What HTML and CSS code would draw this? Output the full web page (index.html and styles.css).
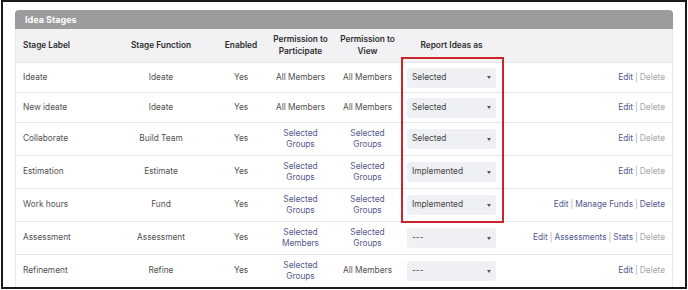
FILE: index.html
```html
<!DOCTYPE html>
<html lang="en">

<head>
  <meta charset="UTF-8" />
  <meta name="viewport" content="width=device-width, initial-scale=1.0" />
  <title>Idea Stages</title>
  <link rel="stylesheet" href="styles.css">
</head>

<body>
  <div class="frame">
    <div class="panel">
      <div class="panel-head">Idea Stages</div>
      <div class="panel-body">
        <table class="stages">
          <colgroup>
            <col class="col-label">
            <col class="col-function">
            <col class="col-enabled">
            <col class="col-part">
            <col class="col-view">
            <col class="col-report">
            <col class="col-actions">
          </colgroup>
          <thead>
            <tr>
              <th class="cell-left">Stage Label</th>
              <th>Stage Function</th>
              <th>Enabled</th>
              <th>Permission to<br>Participate</th>
              <th>Permission to<br>View</th>
              <th>Report Ideas as</th>
              <th></th>
            </tr>
          </thead>
          <tbody>
            <tr>
              <td class="cell-left">Ideate</td>
              <td>Ideate</td>
              <td>Yes</td>
              <td>All Members</td>
              <td>All Members</td>
              <td><div class="select"><span>Selected</span><i class="caret"></i></div></td>
              <td class="cell-right"><a class="link">Edit</a><span class="sep">|</span><span class="muted">Delete</span></td>
            </tr>
            <tr>
              <td class="cell-left">New ideate</td>
              <td>Ideate</td>
              <td>Yes</td>
              <td>All Members</td>
              <td>All Members</td>
              <td><div class="select"><span>Selected</span><i class="caret"></i></div></td>
              <td class="cell-right"><a class="link">Edit</a><span class="sep">|</span><span class="muted">Delete</span></td>
            </tr>
            <tr>
              <td class="cell-left">Collaborate</td>
              <td>Build Team</td>
              <td>Yes</td>
              <td><a class="link">Selected<br>Groups</a></td>
              <td><a class="link">Selected<br>Groups</a></td>
              <td><div class="select"><span>Selected</span><i class="caret"></i></div></td>
              <td class="cell-right"><a class="link">Edit</a><span class="sep">|</span><span class="muted">Delete</span></td>
            </tr>
            <tr>
              <td class="cell-left">Estimation</td>
              <td>Estimate</td>
              <td>Yes</td>
              <td><a class="link">Selected<br>Groups</a></td>
              <td><a class="link">Selected<br>Groups</a></td>
              <td><div class="select"><span>Implemented</span><i class="caret"></i></div></td>
              <td class="cell-right"><a class="link">Edit</a><span class="sep">|</span><span class="muted">Delete</span></td>
            </tr>
            <tr>
              <td class="cell-left">Work hours</td>
              <td>Fund</td>
              <td>Yes</td>
              <td><a class="link">Selected<br>Groups</a></td>
              <td><a class="link">Selected<br>Groups</a></td>
              <td><div class="select"><span>Implemented</span><i class="caret"></i></div></td>
              <td class="cell-right"><a class="link">Edit</a><span class="sep">|</span><a class="link">Manage Funds</a><span class="sep">|</span><a class="link">Delete</a></td>
            </tr>
            <tr>
              <td class="cell-left">Assessment</td>
              <td>Assessment</td>
              <td>Yes</td>
              <td><a class="link">Selected<br>Members</a></td>
              <td><a class="link">Selected<br>Groups</a></td>
              <td><div class="select"><span>---</span><i class="caret"></i></div></td>
              <td class="cell-right"><a class="link">Edit</a><span class="sep">|</span><a class="link">Assessments</a><span class="sep">|</span><a class="link">Stats</a><span class="sep">|</span><span class="muted">Delete</span></td>
            </tr>
            <tr>
              <td class="cell-left">Refinement</td>
              <td>Refine</td>
              <td>Yes</td>
              <td><a class="link">Selected<br>Groups</a></td>
              <td>All Members</td>
              <td><div class="select"><span>---</span><i class="caret"></i></div></td>
              <td class="cell-right"><a class="link">Edit</a><span class="sep">|</span><span class="muted">Delete</span></td>
            </tr>
          </tbody>
        </table>
      </div>
    </div>
    <div class="highlight"></div>
  </div>
</body>

</html>
```

FILE: styles.css
```css
:root {
  --color-text: #505050;
  --color-head-text: #2e2e2e;
  --color-link: #53578e;
  --color-muted: #a6a6ab;
  --color-panel-head: #9c9c9c;
  --color-thead-bg: #f2f2f5;
  --color-border: #e7e7ea;
  --color-select-bg: #eff0f3;
  --color-highlight: #c9252b;
  --font-base: Inter, "Noto Sans", sans-serif;
}

* {
  box-sizing: border-box;
  margin: 0;
  padding: 0;
}

body {
  font-family: var(--font-base);
  font-size: 8.3px;
  color: var(--color-text);
  background-color: #fff;
}

.frame {
  position: relative;
  margin-left: 1px;
  width: 686px;
  height: 289px;
  border: 2px solid #1a1a1a;
  padding: 8px 12px 0;
  overflow: hidden;
}

.panel {
  width: 658px;
}

.panel-head {
  height: 19px;
  line-height: 19px;
  padding-left: 10px;
  background-color: var(--color-panel-head);
  color: #fff;
  font-size: 9px;
  font-weight: 700;
  border-radius: 4px 4px 0 0;
}

.panel-body {
  border-left: 1px solid var(--color-border);
  border-right: 1px solid var(--color-border);
}

.stages {
  width: 100%;
  border-collapse: collapse;
  table-layout: fixed;
}

.col-label {
  width: 92px;
}

.col-function {
  width: 106px;
}

.col-enabled {
  width: 54px;
}

.col-part {
  width: 65px;
}

.col-view {
  width: 69px;
}

.col-report {
  width: 99px;
}

.col-actions {
  width: 171px;
}

.stages th,
.stages td {
  padding: 4.5px 3px;
  line-height: 11.5px;
  text-align: center;
  vertical-align: middle;
  white-space: nowrap;
}

.stages th {
  padding-top: 5px;
  padding-bottom: 5px;
  background-color: var(--color-thead-bg);
  color: var(--color-head-text);
  font-weight: 600;
}

.stages td {
  border-top: 1px solid var(--color-border);
}

.stages .cell-left {
  text-align: left;
  padding-left: 7px;
}

.stages .cell-right {
  text-align: right;
  padding-right: 7px;
}

.link {
  color: var(--color-link);
}

.muted {
  color: var(--color-muted);
}

.sep {
  color: #a9a9ae;
  margin: 0 2px;
}

.select {
  display: flex;
  align-items: center;
  justify-content: space-between;
  width: 89px;
  height: 20px;
  margin: 0 auto;
  padding: 0 5px;
  background-color: var(--color-select-bg);
  border-radius: 3px;
  color: #444;
  text-align: left;
}

.caret {
  width: 0;
  height: 0;
  border-left: 2.5px solid transparent;
  border-right: 2.5px solid transparent;
  border-top: 3px solid #555;
}

.highlight {
  position: absolute;
  left: 398px;
  top: 55px;
  width: 103px;
  height: 166px;
  border: 2px solid var(--color-highlight);
}
```
